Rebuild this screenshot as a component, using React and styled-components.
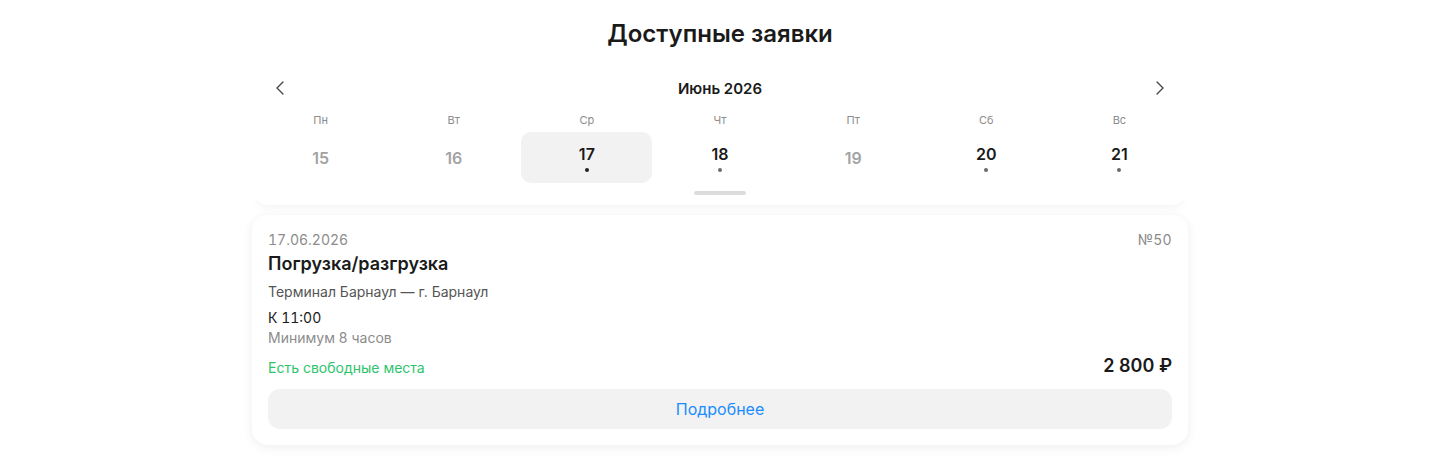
import React from 'react'
import styled, { createGlobalStyle } from 'styled-components'
import { ChevronLeft, ChevronRight } from 'lucide-react'

const GlobalStyle = createGlobalStyle`
  body {
    margin: 0;
    background: #fff;
    font-family: Inter, "Noto Sans", sans-serif;
    color: #1a1a1a;
  }
`

const Page = styled.div`
  width: 936px;
  margin: 0 auto;
  padding: 16px 0 24px;
`

const Heading = styled.h1`
  margin: 0;
  height: 36px;
  line-height: 36px;
  text-align: center;
  font-size: 24px;
  font-weight: 600;
  color: #1a1a1a;
`

// sticky-looking week strip: only its lower edge carries a shadow
const CalendarPanel = styled.div`
  margin-top: 12px;
  padding: 12px 0 10px;
  background: #fff;
  border-radius: 0 0 16px 16px;
  box-shadow: 0 7px 8px -6px rgba(0, 0, 0, 0.07);
`

const MonthBar = styled.div`
  display: flex;
  align-items: center;
  justify-content: space-between;
  height: 24px;
  padding: 0 16px;
`

const NavButton = styled.button`
  display: flex;
  align-items: center;
  justify-content: center;
  width: 24px;
  height: 24px;
  padding: 0;
  border: none;
  background: none;
  color: #444;
  cursor: pointer;
`

const MonthTitle = styled.span`
  font-size: 15px;
  font-weight: 600;
  color: #1a1a1a;
`

const Week = styled.div`
  display: grid;
  grid-template-columns: repeat(7, 1fr);
  padding: 0 2px;
`

const DayName = styled.div`
  margin-top: 12px;
  height: 16px;
  line-height: 16px;
  text-align: center;
  font-size: 11px;
  color: #8c8c8c;
`

const DayCell = styled.div`
  margin: 4px 1px 0;
  height: 51px;
  display: flex;
  flex-direction: column;
  align-items: center;
  justify-content: center;
  border-radius: 10px;
  background: ${(p) => (p.$selected ? '#f2f2f2' : 'transparent')};
  cursor: pointer;
`

const DayNumber = styled.span`
  line-height: 20px;
  font-size: 16px;
  font-weight: 600;
  color: ${(p) => (p.$active ? '#1a1a1a' : '#a3a3a3')};
`

const Dot = styled.span`
  width: 4px;
  height: 4px;
  margin-top: 4px;
  border-radius: 50%;
  background: ${(p) => (p.$selected ? '#222' : '#6b6b6b')};
`

const Handle = styled.div`
  width: 52px;
  height: 4px;
  margin: 8px auto 0;
  border-radius: 2px;
  background: #dcdcdc;
`

const Card = styled.div`
  margin-top: 10px;
  padding: 16px;
  background: #fff;
  border-radius: 16px;
  box-shadow: 0 2px 12px rgba(0, 0, 0, 0.07);
`

const Row = styled.div`
  display: flex;
  align-items: center;
  justify-content: space-between;
  margin-top: ${(p) => p.$gap || 0}px;
`

const Muted = styled.span`
  font-size: 14px;
  line-height: 18px;
  color: #8c8c8c;
  font-variant-numeric: tabular-nums;
  letter-spacing: ${(p) => p.$spacing || 0}px;
`

const Title = styled.div`
  margin-top: 3px;
  font-size: 18px;
  line-height: 24px;
  font-weight: 600;
  color: #1a1a1a;
`

const Line = styled.div`
  margin-top: ${(p) => p.$gap || 0}px;
  font-size: 14px;
  line-height: 20px;
  color: ${(p) => p.$color || '#1a1a1a'};
  font-variant-numeric: ${(p) => (p.$tabular ? 'tabular-nums' : 'normal')};
`

const Free = styled.span`
  font-size: 14px;
  line-height: 24px;
  color: #2ec46c;
`

const Price = styled.span`
  font-size: 18px;
  line-height: 24px;
  font-weight: 600;
  color: #1a1a1a;
  margin-top: -5px;
`

const MoreButton = styled.button`
  display: block;
  width: 100%;
  height: 40px;
  margin-top: 9px;
  border: none;
  border-radius: 12px;
  background: #f2f2f2;
  font-family: inherit;
  font-size: 16px;
  color: #1a8cff;
  cursor: pointer;
`

const days = [
  { name: 'Пн', num: 15 },
  { name: 'Вт', num: 16 },
  { name: 'Ср', num: 17, active: true, selected: true },
  { name: 'Чт', num: 18, active: true },
  { name: 'Пт', num: 19 },
  { name: 'Сб', num: 20, active: true },
  { name: 'Вс', num: 21, active: true },
]

export default function App() {
  return (
    <>
      <GlobalStyle />
      <Page>
        <Heading>Доступные заявки</Heading>
        <CalendarPanel>
          <MonthBar>
            <NavButton><ChevronLeft size={24} strokeWidth={1.3} /></NavButton>
            <MonthTitle>Июнь 2026</MonthTitle>
            <NavButton><ChevronRight size={24} strokeWidth={1.3} /></NavButton>
          </MonthBar>
          <Week>
            {days.map((d) => (
              <DayName key={d.name}>{d.name}</DayName>
            ))}
            {days.map((d) => (
              <DayCell key={d.num} $selected={d.selected}>
                <DayNumber $active={d.active}>{d.num}</DayNumber>
                {d.active && <Dot $selected={d.selected} />}
              </DayCell>
            ))}
          </Week>
          <Handle />
        </CalendarPanel>

        <Card>
          <Row>
            <Muted>17.06.2026</Muted>
            <Muted $spacing={0.3}>№50</Muted>
          </Row>
          <Title>Погрузка/разгрузка</Title>
          <Line $gap={6} $color="#555">Терминал Барнаул — г. Барнаул</Line>
          <Line $gap={6} $tabular>К 11:00</Line>
          <Line $color="#8c8c8c">Минимум 8 часов</Line>
          <Row $gap={8}>
            <Free>Есть свободные места</Free>
            <Price>2 800 ₽</Price>
          </Row>
          <MoreButton>Подробнее</MoreButton>
        </Card>
      </Page>
    </>
  )
}
